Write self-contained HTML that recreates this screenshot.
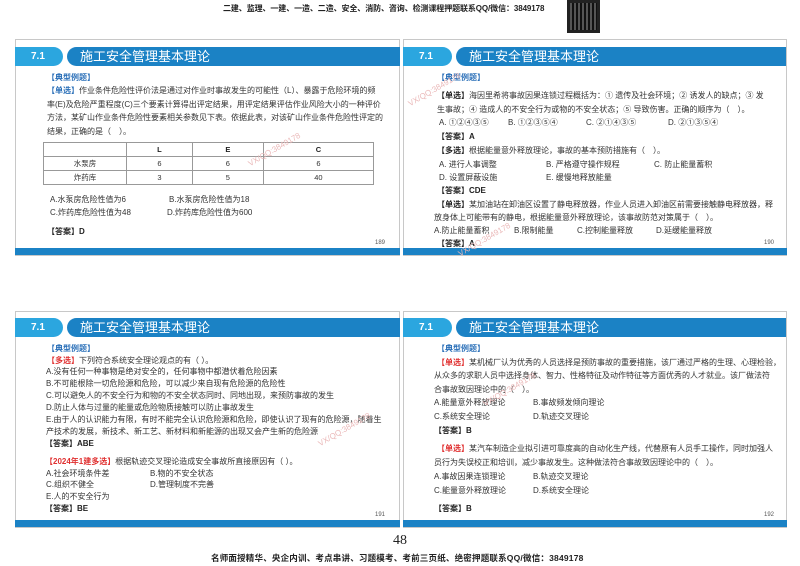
<!DOCTYPE html>
<html><head><meta charset="utf-8"><style>
*{margin:0;padding:0;box-sizing:border-box}
body{width:800px;height:566px;background:#fff;position:relative;overflow:hidden;font-family:"Liberation Sans","Noto Sans CJK SC",sans-serif;color:#333}
.a{position:absolute;white-space:nowrap;font-size:8px;line-height:10px}
.slide{position:absolute;border:1px solid #c8c8c8;background:#fff}
.tab{position:absolute;background:#2ba6df;color:#fff;font-weight:bold;font-size:10px;border-radius:0 10px 10px 0;padding-left:16px;line-height:19px}
.band{position:absolute;background:#1b82c5;color:#fff;font-size:13px;border-radius:10px 0 0 10px;padding-left:13px;line-height:19px}
.bar{position:absolute;background:#1b82c5;height:7px}
.b{color:#2a6fb8;font-weight:bold}
.r{color:#e03030;font-weight:bold}
.k{font-weight:bold;color:#222}
.pn{position:absolute;font-size:6px;color:#555}
table{position:absolute;border-collapse:collapse;font-size:7.5px}
td{border:1px solid #999;text-align:center;height:14px;padding:0}
.wm{position:absolute;color:#eab8b8;font-size:8px;transform:rotate(-30deg);white-space:nowrap}
</style></head><body>
<div class="a" style="left:223px;top:4px;font-size:8px;font-weight:bold;color:#222;letter-spacing:-0.1px">二建、监理、一建、一造、二造、安全、消防、咨询、检测课程押题联系QQ/微信：3849178</div>
<div style="position:absolute;left:567px;top:0;width:33px;height:33px;background:#222"><div style="position:absolute;left:3px;top:3px;width:27px;height:27px;background:repeating-linear-gradient(90deg,#555 0 2px,#111 2px 4px)"></div></div>

<!-- slide 1 -->
<div class="slide" style="left:15px;top:39px;width:385px;height:217px"></div>
<div class="tab" style="left:15px;top:47px;width:48px">7.1</div>
<div class="band" style="left:67px;top:47px;width:333px">施工安全管理基本理论</div>
<div class="a b" style="left:47px;top:73px">【典型例题】</div>
<div class="a" style="left:47px;top:86px"><span class="b">【单选】</span>作业条件危险性评价法是通过对作业时事故发生的可能性（L）、暴露于危险环境的频</div>
<div class="a" style="left:47px;top:100px">率(E)及危险严重程度(C)三个要素计算得出评定结果，用评定结果评估作业风险大小的一种评价</div>
<div class="a" style="left:47px;top:113px">方法，某矿山作业条件危险性要素相关参数见下表。依据此表，对该矿山作业条件危险性评定的</div>
<div class="a" style="left:47px;top:127px">结果，正确的是（　）。</div>
<table style="left:43px;top:142px;width:331px"><tr><td style="width:83px"></td><td class="k">L</td><td class="k">E</td><td class="k">C</td></tr><tr><td>水泵房</td><td>6</td><td>6</td><td>6</td></tr><tr><td>炸药库</td><td>3</td><td>5</td><td>40</td></tr></table>
<div class="a" style="left:50px;top:195px">A.水泵房危险性值为6</div>
<div class="a" style="left:169px;top:195px">B.水泵房危险性值为18</div>
<div class="a" style="left:50px;top:208px">C.炸药库危险性值为48</div>
<div class="a" style="left:167px;top:208px">D.炸药库危险性值为600</div>
<div class="a k" style="left:47px;top:227px">【答案】D</div>
<div class="pn" style="left:375px;top:240px">189</div>
<div class="bar" style="left:15px;top:248px;width:385px"></div>

<!-- slide 2 -->
<div class="slide" style="left:403px;top:39px;width:384px;height:217px"></div>
<div class="tab" style="left:403px;top:47px;width:49px">7.1</div>
<div class="band" style="left:456px;top:47px;width:330px">施工安全管理基本理论</div>
<div class="a b" style="left:437px;top:73px">【典型例题】</div>
<div class="a" style="left:437px;top:91px"><span class="k">【单选】</span>海因里希将事故因果连锁过程概括为：① 遗传及社会环境；② 诱发人的缺点；③ 发</div>
<div class="a" style="left:437px;top:105px">生事故；④ 造成人的不安全行为或物的不安全状态；⑤ 导致伤害。正确的顺序为（　）。</div>
<div class="a" style="left:439px;top:118px">A. ①②④③⑤</div><div class="a" style="left:508px;top:118px">B. ①②③⑤④</div><div class="a" style="left:586px;top:118px">C. ②①④③⑤</div><div class="a" style="left:668px;top:118px">D. ②①③⑤④</div>
<div class="a k" style="left:437px;top:132px">【答案】A</div>
<div class="a" style="left:437px;top:146px"><span class="k">【多选】</span>根据能量意外释放理论，事故的基本预防措施有（　）。</div>
<div class="a" style="left:439px;top:160px">A. 进行人事调整</div><div class="a" style="left:546px;top:160px">B. 严格遵守操作规程</div><div class="a" style="left:654px;top:160px">C. 防止能量蓄积</div>
<div class="a" style="left:439px;top:173px">D. 设置屏蔽设施</div><div class="a" style="left:546px;top:173px">E. 缓慢地释放能量</div>
<div class="a k" style="left:437px;top:186px">【答案】CDE</div>
<div class="a" style="left:437px;top:200px"><span class="k">【单选】</span>某加油站在卸油区设置了静电释放器，作业人员进入卸油区前需要接触静电释放器，释</div>
<div class="a" style="left:434px;top:213px">放身体上可能带有的静电，根据能量意外释放理论，该事故防范对策属于（　）。</div>
<div class="a" style="left:434px;top:226px">A.防止能量蓄积</div><div class="a" style="left:514px;top:226px">B.限制能量</div><div class="a" style="left:577px;top:226px">C.控制能量释放</div><div class="a" style="left:656px;top:226px">D.延缓能量释放</div>
<div class="a k" style="left:437px;top:239px">【答案】A</div>
<div class="pn" style="left:764px;top:240px">190</div>
<div class="bar" style="left:403px;top:248px;width:384px"></div>

<!-- slide 3 -->
<div class="slide" style="left:15px;top:311px;width:385px;height:217px"></div>
<div class="tab" style="left:15px;top:318px;width:48px">7.1</div>
<div class="band" style="left:67px;top:318px;width:333px">施工安全管理基本理论</div>
<div class="a b" style="left:47px;top:344px">【典型例题】</div>
<div class="a" style="left:47px;top:356px"><span class="r">【多选】</span>下列符合系统安全理论观点的有（ ）。</div>
<div class="a" style="left:46px;top:367px">A.没有任何一种事物是绝对安全的，任何事物中都潜伏着危险因素</div>
<div class="a" style="left:46px;top:379px">B.不可能根除一切危险源和危险，可以减少来自现有危险源的危险性</div>
<div class="a" style="left:46px;top:391px">C.可以避免人的不安全行为和物的不安全状态同时、同地出现，来预防事故的发生</div>
<div class="a" style="left:46px;top:403px">D.防止人体与过量的能量或危险物质接触可以防止事故发生</div>
<div class="a" style="left:46px;top:415px">E.由于人的认识能力有限，有时不能完全认识危险源和危险，即使认识了现有的危险源，随着生</div>
<div class="a" style="left:46px;top:427px">产技术的发展，新技术、新工艺、新材料和新能源的出现又会产生新的危险源</div>
<div class="a k" style="left:45px;top:439px">【答案】ABE</div>
<div class="a" style="left:45px;top:457px"><span class="r">【2024年1建多选】</span>根据轨迹交叉理论造成安全事故所直接原因有（ ）。</div>
<div class="a" style="left:46px;top:469px">A.社会环境条件差</div><div class="a" style="left:150px;top:469px">B.物的不安全状态</div>
<div class="a" style="left:46px;top:480px">C.组织不健全</div><div class="a" style="left:150px;top:480px">D.管理制度不完善</div>
<div class="a" style="left:46px;top:492px">E.人的不安全行为</div>
<div class="a k" style="left:45px;top:504px">【答案】BE</div>
<div class="pn" style="left:375px;top:512px">191</div>
<div class="bar" style="left:15px;top:520px;width:385px"></div>

<!-- slide 4 -->
<div class="slide" style="left:403px;top:311px;width:384px;height:217px"></div>
<div class="tab" style="left:403px;top:318px;width:49px">7.1</div>
<div class="band" style="left:456px;top:318px;width:330px">施工安全管理基本理论</div>
<div class="a b" style="left:437px;top:344px">【典型例题】</div>
<div class="a" style="left:437px;top:358px"><span class="r">【单选】</span>某机械厂认为优秀的人员选择是预防事故的重要措施，该厂通过严格的生理、心理检验，</div>
<div class="a" style="left:434px;top:371px">从众多的求职人员中选择身体、智力、性格特征及动作特征等方面优秀的人才就业。该厂做法符</div>
<div class="a" style="left:434px;top:385px">合事故致因理论中的（　）。</div>
<div class="a" style="left:434px;top:398px">A.能量意外释放理论</div><div class="a" style="left:533px;top:398px">B.事故频发倾向理论</div>
<div class="a" style="left:434px;top:412px">C.系统安全理论</div><div class="a" style="left:533px;top:412px">D.轨迹交叉理论</div>
<div class="a k" style="left:434px;top:426px">【答案】B</div>
<div class="a" style="left:437px;top:444px"><span class="r">【单选】</span>某汽车制造企业拟引进可靠度高的自动化生产线，代替原有人员手工操作，同时加强人</div>
<div class="a" style="left:434px;top:458px">员行为失误校正和培训，减少事故发生。这种做法符合事故致因理论中的（　）。</div>
<div class="a" style="left:434px;top:472px">A.事故因果连锁理论</div><div class="a" style="left:533px;top:472px">B.轨迹交叉理论</div>
<div class="a" style="left:434px;top:486px">C.能量意外释放理论</div><div class="a" style="left:533px;top:486px">D.系统安全理论</div>
<div class="a k" style="left:434px;top:504px">【答案】B</div>
<div class="pn" style="left:764px;top:512px">192</div>
<div class="bar" style="left:403px;top:520px;width:384px"></div>

<div class="wm" style="left:245px;top:145px">VX/QQ:3849178</div>
<div class="wm" style="left:405px;top:85px">VX/QQ:3849178</div>
<div class="wm" style="left:455px;top:235px">VX/QQ:3849178</div>
<div class="wm" style="left:315px;top:425px">VX/QQ:3849178</div>
<div class="wm" style="left:480px;top:385px">VX/QQ:3849178</div>

<div class="a" style="left:393px;top:533px;font-size:14px;line-height:16px;font-family:'Liberation Serif',serif;color:#222">48</div>
<div class="a" style="left:211px;top:553px;font-size:8.5px;font-weight:bold;color:#222;letter-spacing:0.2px">名师面授精华、央企内训、考点串讲、习题模考、考前三页纸、绝密押题联系QQ/微信：3849178</div>
</body></html>
